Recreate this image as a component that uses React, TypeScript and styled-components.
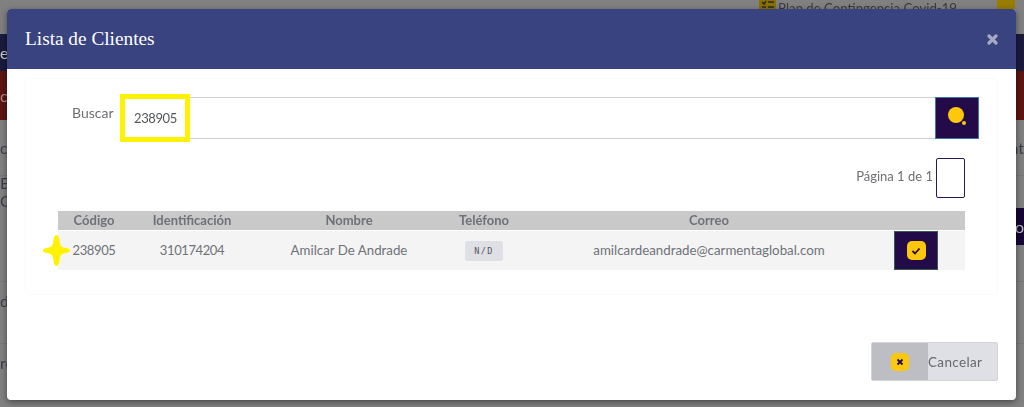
import React from "react";
import styled, { createGlobalStyle } from "styled-components";

const GlobalStyle = createGlobalStyle`
  html, body {
    margin: 0;
    padding: 0;
    height: 407px;
    overflow: hidden;
    background: #808080;
    font-family: "Lato", "Liberation Sans", sans-serif;
  }
`;

const BackPage = styled.div`
  height: 407px;
  display: flex;
  flex-direction: column;
  background: #808080;
  color: #3c3f4a;
  font-family: "Lato", sans-serif;
  filter: blur(0.5px);
`;

const BackRow = styled.div<{ $h: number; $bg?: string; $fg?: string; $line?: boolean }>`
  height: ${(p) => p.$h}px;
  flex: none;
  background: ${(p) => p.$bg || "transparent"};
  color: ${(p) => p.$fg || "#3c3f4a"};
  border-bottom: ${(p) => (p.$line ? "1px solid #777" : "0")};
  display: flex;
  align-items: center;
  justify-content: space-between;
  font-size: 16px;
  white-space: nowrap;
  overflow: hidden;
  box-sizing: border-box;
`;

const BackStack = styled.div`
  display: flex;
  flex-direction: column;
  line-height: 18px;
`;

const BackBand = styled.div`
  align-self: stretch;
  width: 30px;
  background: #160635;
  color: #bbb;
  display: flex;
  align-items: center;
  justify-content: flex-end;
`;

const TopNote = styled.div`
  display: flex;
  align-items: flex-start;
  justify-content: flex-end;
  gap: 2px;
  height: 9px;
  flex: none;
  padding-right: 9px;
  overflow: hidden;
  font-size: 13.2px;
  color: #3a3a3a;
  line-height: 16px;
`;

const NoteIcon = styled.span`
  width: 17px;
  height: 14px;
  background: #8a7000;
  flex: none;
  display: flex;
  align-items: flex-start;
  justify-content: center;
`;

const NoteBadge = styled.span`
  width: 18px;
  height: 14px;
  margin-left: 38px;
  background: #997d00;
  border-radius: 0 0 8px 8px;
  flex: none;
`;

const Overlay = styled.div`
  position: fixed;
  inset: 0;
  display: flex;
  align-items: flex-start;
  justify-content: center;
`;

const Modal = styled.div`
  margin: 9px 0 0 -1px;
  width: 1009px;
  height: 391px;
  background: #fff;
  border-radius: 4px;
  box-shadow: 0 2px 6px rgba(0, 0, 0, 0.45);
  display: flex;
  flex-direction: column;
  color: #6b6d70;
  overflow: hidden;
`;

const Header = styled.header`
  height: 60px;
  flex: none;
  background: #39437f;
  display: flex;
  align-items: center;
  justify-content: space-between;
  padding: 0 18px;
`;

const Title = styled.h4`
  margin: 0;
  font-family: "Liberation Serif", serif;
  font-weight: 400;
  font-size: 19.3px;
  color: #fff;
`;

const Close = styled.svg`
  width: 11px;
  height: 11px;
  color: #a5a9c6;
`;

const Body = styled.div`
  flex: 1;
  display: flex;
  flex-direction: column;
  padding: 9px 18px 0;
`;

const Card = styled.section`
  height: 217px;
  box-sizing: border-box;
  border: 1px solid #fafafa;
  border-radius: 4px;
  padding: 18px 18px 0 32px;
  display: flex;
  flex-direction: column;
`;

const SearchRow = styled.div`
  display: flex;
  align-items: flex-start;
  padding-left: 14px;
`;

const SearchLabel = styled.label`
  width: 48px;
  flex: none;
  margin-top: 7px;
  font-size: 14px;
  color: #6e6f72;
`;

const InputWrap = styled.div`
  position: relative;
  flex: 1;
  height: 42px;
  box-sizing: border-box;
  border: 1px solid #d2d2d2;
  border-right: 0;
  display: flex;
  align-items: center;
  padding-left: 13px;
  font-size: 13px;
  letter-spacing: -0.4px;
  color: #55575a;
`;

const Highlight = styled.span`
  position: absolute;
  left: -1px;
  top: -4px;
  width: 70px;
  height: 48px;
  box-sizing: border-box;
  border: 5px solid #fff200;
`;

const SearchButton = styled.button`
  width: 44px;
  height: 42px;
  flex: none;
  padding: 0;
  box-sizing: border-box;
  border: 1px solid #3d76ab;
  background: #230a48;
  display: flex;
  align-items: center;
  justify-content: center;
`;

const Pager = styled.div`
  display: flex;
  justify-content: flex-end;
  align-items: flex-start;
  gap: 3px;
  margin: 19px 14px 0 0;
  font-size: 13px;
  color: #6e6f72;
`;

const PagerText = styled.span`
  margin-top: 10px;
`;

const PageBox = styled.span`
  width: 29px;
  height: 40px;
  box-sizing: border-box;
  border: 1px solid #2c1458;
  border-radius: 2px;
  background: #fff;
`;

const Table = styled.div`
  position: relative;
  margin: 13px 14px 0 0;
  display: flex;
  flex-direction: column;
`;

const TableRow = styled.div<{ $head?: boolean }>`
  display: grid;
  grid-template-columns: 72px 124px 190px 80px 370px 71px;
  align-items: center;
  height: ${(p) => (p.$head ? "19px" : "39px")};
  margin-bottom: ${(p) => (p.$head ? "1px" : "0")};
  background: ${(p) => (p.$head ? "#c9c9c9" : "#f4f4f4")};
  font-size: ${(p) => (p.$head ? "13px" : "13.3px")};
  font-weight: ${(p) => (p.$head ? 700 : 400)};
  color: ${(p) => (p.$head ? "#6e7178" : "#6f7278")};
  line-height: 16px;
  text-align: center;
`;

const HeadText = styled.span`
  position: relative;
  top: -1px;
`;

const CellText = styled.span`
  position: relative;
  top: -1px;
`;

const NumberText = styled(CellText)`
  font-size: 13px;
  letter-spacing: -0.4px;
`;

const Tag = styled.span`
  display: inline-block;
  width: 38px;
  height: 20px;
  line-height: 20px;
  background: #dfe0e5;
  border-radius: 3px;
  font-family: "DejaVu Sans Mono", monospace;
  font-size: 8.5px;
  letter-spacing: 1.4px;
  color: #55575c;
`;

const SelectButton = styled.button`
  width: 44px;
  height: 39px;
  padding: 0;
  box-sizing: border-box;
  border: 1px solid #3a5a50;
  background: #230a48;
  display: flex;
  align-items: center;
  justify-content: center;
`;

const YellowBadge = styled.span<{ $size: number }>`
  width: ${(p) => p.$size}px;
  height: ${(p) => p.$size}px;
  border-radius: 5px;
  background: #fdc70c;
  display: flex;
  align-items: center;
  justify-content: center;
`;

const Star = styled.svg`
  position: absolute;
  left: -15px;
  top: 24px;
  width: 27px;
  height: 31px;
`;

const Footer = styled.div`
  display: flex;
  justify-content: flex-end;
  margin-top: 47px;
`;

const CancelButton = styled.button`
  width: 127px;
  height: 39px;
  padding: 0;
  box-sizing: border-box;
  border: 1px solid #d3d4da;
  border-radius: 2px;
  background: #dfe0e5;
  display: flex;
  align-items: center;
  font-family: inherit;
  font-size: 13.5px;
  letter-spacing: 0.35px;
  color: #66686c;
`;

const CancelIcon = styled.span`
  width: 56px;
  align-self: stretch;
  background: #bdbec3;
  display: flex;
  align-items: center;
  justify-content: center;
`;

export default function App() {
  return (
    <>
      <GlobalStyle />
      <BackPage>
        <TopNote>
          <NoteIcon>
            <svg width="13" height="9" viewBox="0 0 13 9">
              <path d="M1 2 L3 4 L5 1 M7 2 H13 M1 7 H5 M7 7 H13" fill="none" stroke="#2a2a2a" strokeWidth="1.5" />
            </svg>
          </NoteIcon>
          <span>Plan de Contingencia Covid-19</span>
          <NoteBadge />
        </TopNote>
        <BackRow $h={25} />
        <BackRow $h={37} $bg="#1a1a3e" $fg="#c8c8c8">
          <span>e</span>
        </BackRow>
        <BackRow $h={49} $bg="#5c1512" $fg="#b08a88">
          <span>ci</span>
        </BackRow>
        <BackRow $h={56} $line>
          <span>cu</span>
          <span>nt</span>
        </BackRow>
        <BackRow $h={32}>
          <BackStack>
            <span>E</span>
            <span>C</span>
          </BackStack>
        </BackRow>
        <BackRow $h={37}>
          <span />
          <BackBand>to</BackBand>
        </BackRow>
        <BackRow $h={37} $line />
        <BackRow $h={36}>
          <span>de</span>
        </BackRow>
        <BackRow $h={26} $line />
        <BackRow $h={36}>
          <span>re</span>
        </BackRow>
      </BackPage>
      <Overlay>
        <Modal>
          <Header>
            <Title>Lista de Clientes</Title>
            <Close viewBox="0 0 11 11">
              <path d="M2 2 L9 9 M9 2 L2 9" stroke="currentColor" strokeWidth="3.2" strokeLinecap="round" />
            </Close>
          </Header>
          <Body>
            <Card>
              <SearchRow>
                <SearchLabel>Buscar</SearchLabel>
                <InputWrap>
                  238905
                  <Highlight />
                </InputWrap>
                <SearchButton aria-label="Buscar">
                  <svg width="22" height="22" viewBox="0 0 22 22">
                    <circle cx="10" cy="8" r="8" fill="#fdc70c" />
                    <circle cx="18" cy="16" r="2" fill="#fdc70c" />
                  </svg>
                </SearchButton>
              </SearchRow>
              <Pager>
                <PagerText>Página 1 de 1</PagerText>
                <PageBox />
              </Pager>
              <Table>
                <TableRow $head>
                  <HeadText>Código</HeadText>
                  <HeadText>Identificación</HeadText>
                  <HeadText>Nombre</HeadText>
                  <HeadText>Teléfono</HeadText>
                  <HeadText>Correo</HeadText>
                  <span />
                </TableRow>
                <TableRow>
                  <NumberText>238905</NumberText>
                  <NumberText>310174204</NumberText>
                  <CellText>Amilcar De Andrade</CellText>
                  <span>
                    <Tag>N/D</Tag>
                  </span>
                  <CellText>amilcardeandrade@carmentaglobal.com</CellText>
                  <SelectButton aria-label="Seleccionar">
                    <YellowBadge $size={19}>
                      <svg width="12" height="12" viewBox="0 0 12 12">
                        <path d="M2.5 6 L5 8.5 L9.5 3.5" fill="none" stroke="#230a48" strokeWidth="1.8" />
                      </svg>
                    </YellowBadge>
                  </SelectButton>
                </TableRow>
                <Star viewBox="0 0 27 31">
                  <path
                    d="M13.5 0 C16 0 16.5 5 17 8.5 C17.5 11.5 20 12.5 23 13 C25.5 13.4 27 14 27 15.5 C27 17 25.5 17.6 23 18 C20 18.5 17.5 19.5 17 22.5 C16.5 26 16 31 13.5 31 C11 31 10.5 26 10 22.5 C9.5 19.5 7 18.5 4 18 C1.5 17.6 0 17 0 15.5 C0 14 1.5 13.4 4 13 C7 12.5 9.5 11.5 10 8.5 C10.5 5 11 0 13.5 0 Z"
                    fill="#fff200"
                  />
                </Star>
              </Table>
            </Card>
            <Footer>
              <CancelButton>
                <CancelIcon>
                  <YellowBadge $size={18}>
                    <svg width="10" height="10" viewBox="0 0 10 10">
                      <path d="M2.5 2.5 L7.5 7.5 M7.5 2.5 L2.5 7.5" stroke="#230a48" strokeWidth="1.8" />
                    </svg>
                  </YellowBadge>
                </CancelIcon>
                <span>Cancelar</span>
              </CancelButton>
            </Footer>
          </Body>
        </Modal>
      </Overlay>
    </>
  );
}
